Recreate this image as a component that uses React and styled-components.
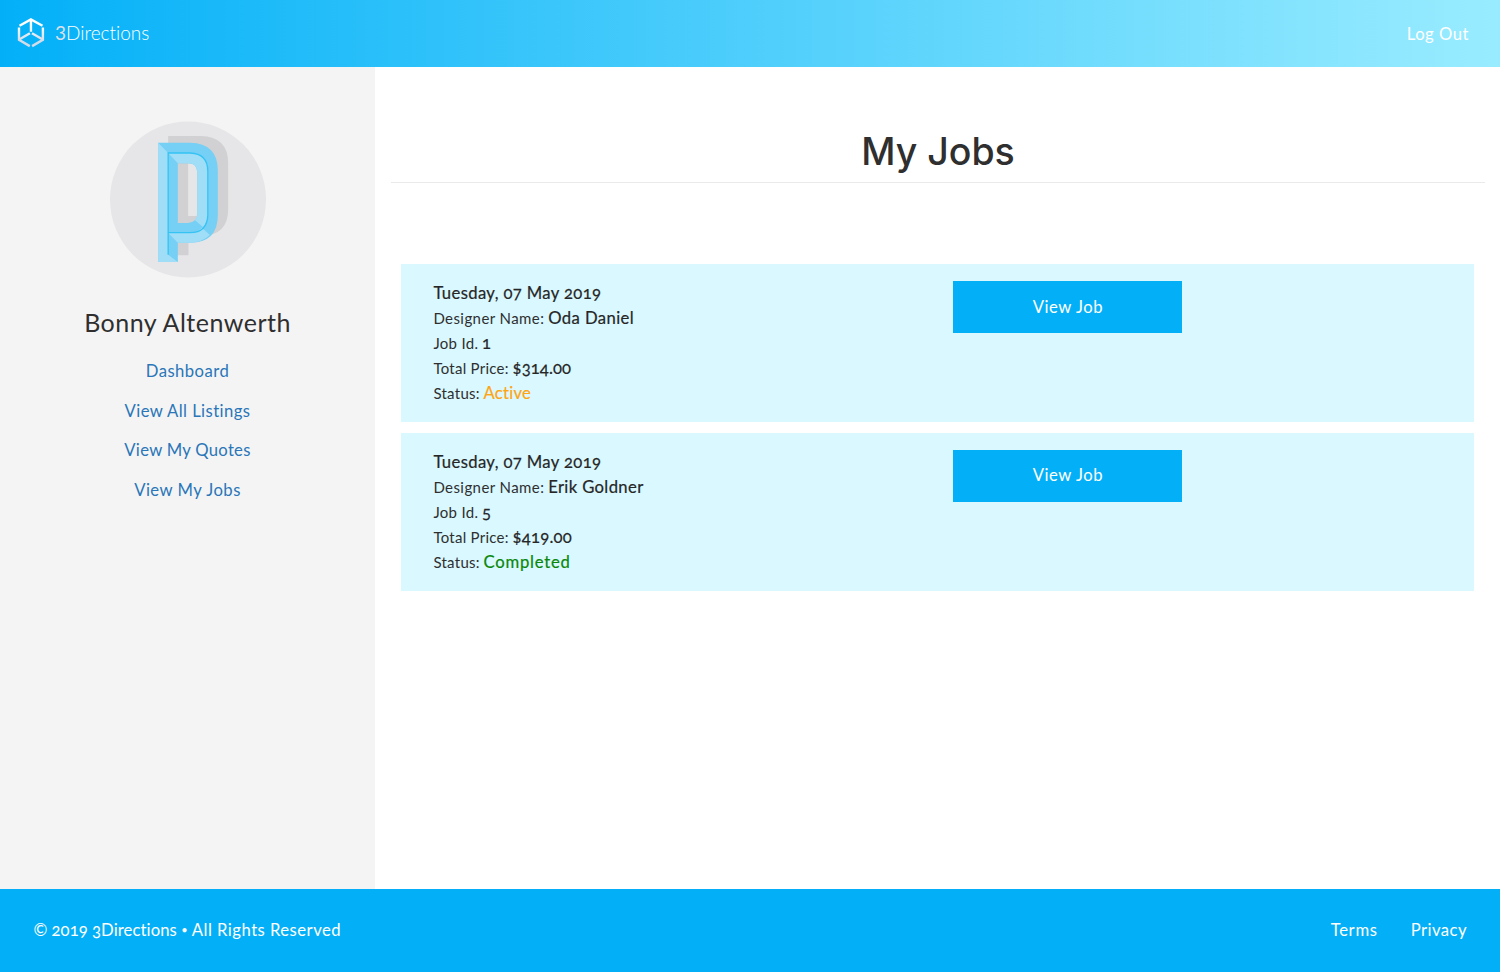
import React from "react";
import styled, { createGlobalStyle } from "styled-components";

const GlobalStyle = createGlobalStyle`
  *, *::before, *::after { box-sizing: border-box; }
  body {
    margin: 0;
    background: #fff;
    color: #2f2f2f;
    font-family: Lato, "Open Sans", sans-serif;
    font-size: 16.67px;
    font-variant-numeric: oldstyle-nums;
    font-variant-ligatures: none;
  }
  a { text-decoration: none; }
`;

const Page = styled.div`
  display: flex;
  flex-direction: column;
  height: 972px;
`;

const Header = styled.header`
  display: flex;
  align-items: center;
  justify-content: space-between;
  flex: none;
  height: 67.4px;
  padding: 0 31px 0 17px;
  background: linear-gradient(90deg, #03b0f8 0%, #99ecff 100%);
`;

const Brand = styled.a`
  display: flex;
  align-items: center;
  gap: 10px;
  padding-bottom: 2px;
  color: #fff;
`;

const BrandName = styled.span`
  font-size: 19px;
  font-weight: 300;
  line-height: 24px;
  letter-spacing: 0;
  font-variant-numeric: lining-nums;
`;

const BrandDigit = styled.span`
  color: #dcdfe8;
  font-weight: 400;
`;

const PlainLink = styled.a`
  color: #fff;
  line-height: 24px;
  letter-spacing: ${(p) => p.$track}px;
`;

const Body = styled.div`
  display: flex;
  flex: 1;
  min-height: 0;
`;

const Sidebar = styled.aside`
  display: flex;
  flex-direction: column;
  align-items: center;
  width: 375px;
  padding-top: 42.6px;
  background: #f4f4f4;
`;

const UserName = styled.h2`
  margin: 18px 0 23.2px;
  font-size: 25px;
  font-weight: 400;
  line-height: 28px;
  letter-spacing: 0.48px;
`;

const SideNav = styled.nav`
  display: flex;
  flex-direction: column;
  align-items: center;
  gap: 15.6px;
`;

const SideLink = styled.a`
  color: #2a76b8;
  line-height: 24px;
  letter-spacing: ${(p) => p.$track}px;
`;

const Main = styled.main`
  flex: 1;
  padding: 59px 15.5px 0;
`;

const Title = styled.h1`
  margin: 0;
  padding: 0 0 4px 1px;
  border-bottom: 1px solid #eaeaea;
  font-family: Inter, sans-serif;
  font-size: 37.5px;
  font-weight: 500;
  line-height: 52px;
  letter-spacing: 0;
  text-align: center;
`;

const JobList = styled.div`
  display: flex;
  flex-direction: column;
  gap: 10.6px;
  padding: 80.7px 10.5px 0;
`;

const JobCard = styled.section`
  display: grid;
  grid-template-columns: 520px 229px;
  align-items: start;
  height: 158.2px;
  padding: 16.7px 32.4px;
  background: #d9f8ff;
`;

const Details = styled.div`
  display: flex;
  flex-direction: column;
`;

const Line = styled.div`
  display: flex;
  align-items: baseline;
  gap: 3.8px;
  height: 25px;
  line-height: 25px;
`;

const Label = styled.span`
  font-size: 15px;
  letter-spacing: ${(p) => p.$track}px;
`;

const Value = styled.span`
  color: ${(p) => p.$color || "#262626"};
  letter-spacing: ${(p) => p.$track}px;
  -webkit-text-stroke: 0.2px currentColor;
`;

const JobButton = styled.a`
  display: flex;
  align-items: center;
  justify-content: center;
  height: 52px;
  padding-bottom: 0.4px;
  background: #03b0f8;
  color: #fff;
  letter-spacing: 0.55px;
`;

const Footer = styled.footer`
  display: flex;
  align-items: center;
  justify-content: space-between;
  flex: none;
  height: 83px;
  padding: 0 33px 2px 33.5px;
  background: #03b0f8;
  color: #fff;
`;

const Copyright = styled.span`
  letter-spacing: 0.5px;
  word-spacing: -0.2px;
`;

const Years = styled.span`
  letter-spacing: 0.1px;
  word-spacing: -0.3px;
`;

const Dot = styled.span`
  margin: 0 -0.3px;
  font-size: 11px;
  vertical-align: 1.5px;
`;

const FooterLinks = styled.nav`
  display: flex;
  gap: 33px;
`;

function CubeLogo() {
  return (
    <svg width="28" height="30" viewBox="0 0 28 30" fill="none" strokeWidth="2.4">
      <defs>
        <linearGradient id="cube" x1="0" y1="0" x2="0" y2="30" gradientUnits="userSpaceOnUse">
          <stop offset="0.2" stopColor="#fff" />
          <stop offset="0.8" stopColor="#d3dbe8" />
        </linearGradient>
      </defs>
      <g stroke="url(#cube)">
        <path d="M2.5 7.7 13.9 1.4 25.5 7.7" />
        <path d="M13.95 1.6v12.2" />
        <path d="M2 9.4v12.4l10.8 6.3" />
        <path d="M25.9 9.4v12.4l-10.8 6.3" />
        <path d="M2.6 21.3 12.9 15.2" />
        <path d="M25.3 21.3 15 15.2" />
      </g>
    </svg>
  );
}

function Avatar() {
  return (
    <svg width="180" height="180" viewBox="-6.5 0 540 540">
      <circle cx="263.5" cy="268.5" r="234" fill="#e6e6e8" />
      <path
        fill="#d1d1d3"
        fillRule="evenodd"
        d="M204 78H302Q384 80 384 160V298Q384 376 304 378H265V436H204ZM264 160V318H286Q292 318 292 308V160Z"
      />
      <path
        fill="#76cff4"
        fillRule="evenodd"
        d="M174 98H270Q353 100 353 182V315Q353 398 270 398H233V456H174ZM233 160V339H264Q292 337 292 309V188Q290 160 264 160Z"
      />
      <path fill="#a0def8" d="M174 98 204 129V434L233 456H174Z" />
      <path fill="#a0def8" d="M204 369H270Q291 368 305 353L329 375Q304 398 270 398H233Z" />
      <path
        fill="#a0def8"
        d="M204 129H270Q324 131 324 184V315Q323 335 309 352L284 330Q292 321 292 309V188Q290 160 264 160H233Z"
      />
      <path fill="none" stroke="#35c3f4" strokeWidth="4" d="M204 434V129H270Q323 131 323 184V315Q321 368 270 368H204" />
    </svg>
  );
}

const links = [
  { text: "Dashboard", track: 0.46 },
  { text: "View All Listings", track: 0.42 },
  { text: "View My Quotes", track: 0.28 },
  { text: "View My Jobs", track: 0.48 },
];

const jobs = [
  {
    id: "1",
    designer: "Oda Daniel",
    designerTrack: 0.42,
    price: "$314.00",
    priceTrack: 0.1,
    status: "Active",
    statusTrack: 0.2,
    color: "#ffa412",
  },
  {
    id: "5",
    designer: "Erik Goldner",
    designerTrack: 0.36,
    price: "$419.00",
    priceTrack: 0.22,
    status: "Completed",
    statusTrack: 0.76,
    color: "#0a870a",
  },
];

function Job({ job }) {
  return (
    <JobCard>
      <Details>
        <Line>
          <Value $track={0.36}>Tuesday, 07 May 2019</Value>
        </Line>
        <Line>
          <Label $track={0.42}>Designer Name:</Label>
          <Value $track={job.designerTrack}>{job.designer}</Value>
        </Line>
        <Line>
          <Label $track={0.3}>Job Id.</Label>
          <Value $track={0}>{job.id}</Value>
        </Line>
        <Line>
          <Label $track={0.26}>Total Price:</Label>
          <Value $track={job.priceTrack}>{job.price}</Value>
        </Line>
        <Line>
          <Label $track={0.27}>Status:</Label>
          <Value $track={job.statusTrack} $color={job.color}>
            {job.status}
          </Value>
        </Line>
      </Details>
      <JobButton>View Job</JobButton>
    </JobCard>
  );
}

export default function App() {
  return (
    <Page>
      <GlobalStyle />
      <Header>
        <Brand>
          <CubeLogo />
          <BrandName>
            <BrandDigit>3</BrandDigit>Directions
          </BrandName>
        </Brand>
        <PlainLink $track={0.5}>Log Out</PlainLink>
      </Header>
      <Body>
        <Sidebar>
          <Avatar />
          <UserName>Bonny Altenwerth</UserName>
          <SideNav>
            {links.map((l) => (
              <SideLink key={l.text} $track={l.track}>
                {l.text}
              </SideLink>
            ))}
          </SideNav>
        </Sidebar>
        <Main>
          <Title>My Jobs</Title>
          <JobList>
            {jobs.map((j) => (
              <Job key={j.id} job={j} />
            ))}
          </JobList>
        </Main>
      </Body>
      <Footer>
        <Copyright>
          <Years>© 2019 3Directions</Years> <Dot>•</Dot> All Rights Reserved
        </Copyright>
        <FooterLinks>
          <PlainLink $track={0.7}>Terms</PlainLink>
          <PlainLink $track={0.45}>Privacy</PlainLink>
        </FooterLinks>
      </Footer>
    </Page>
  );
}
